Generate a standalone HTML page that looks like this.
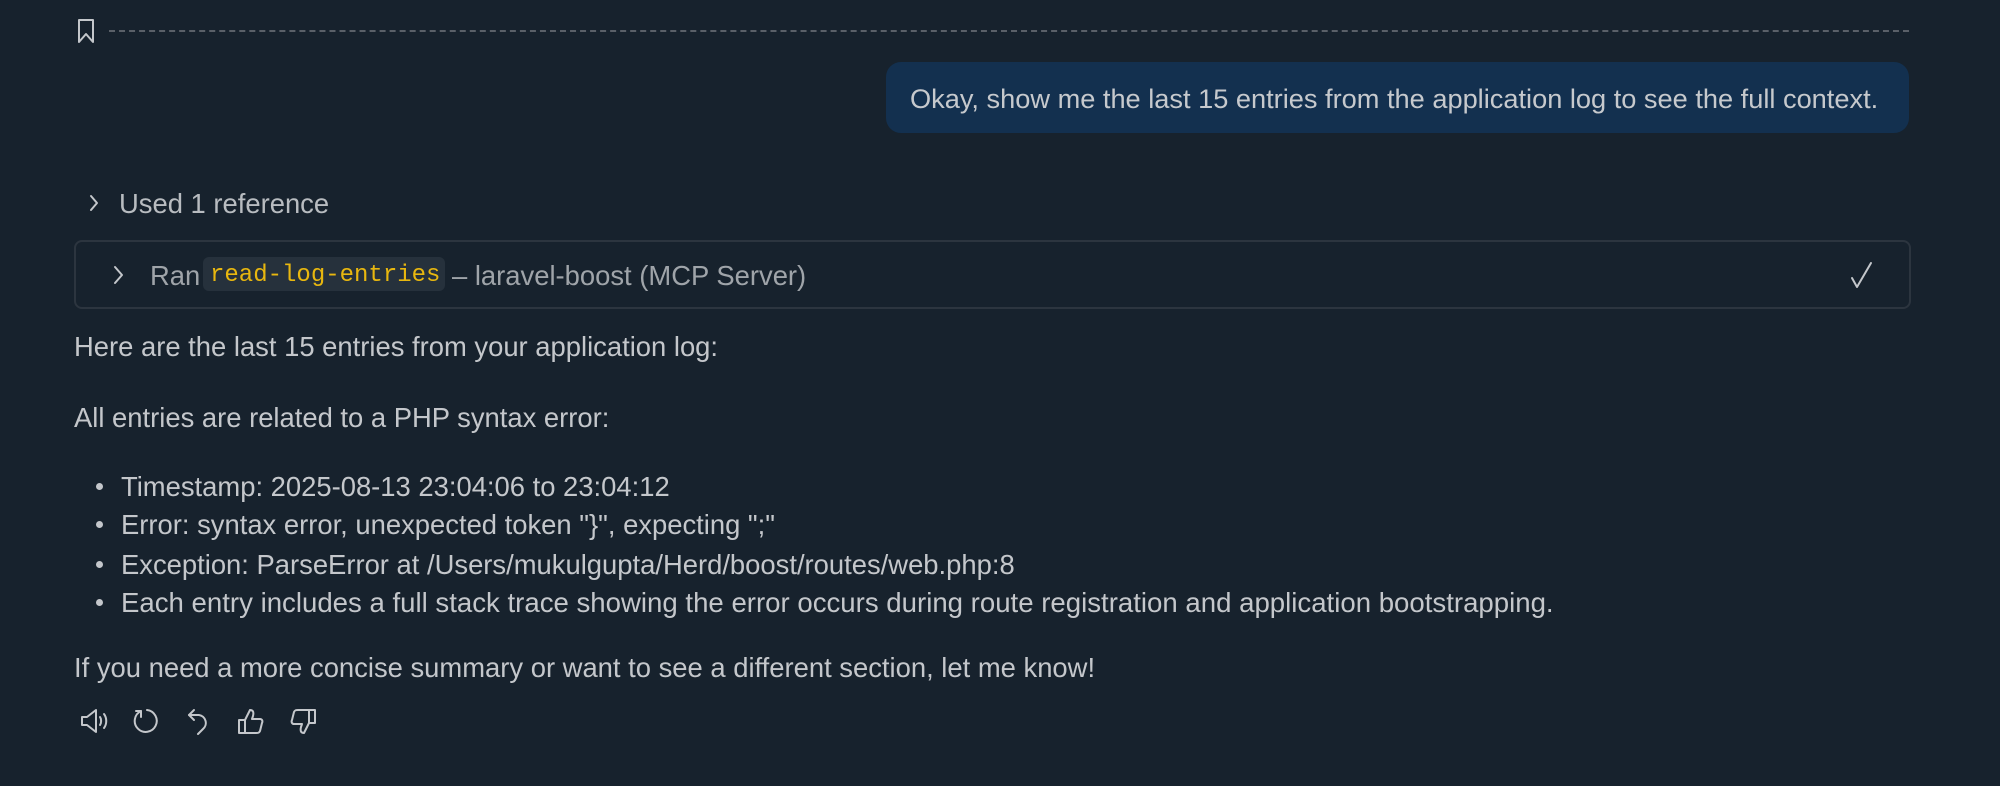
<!DOCTYPE html>
<html><head><meta charset="utf-8"><style>
html,body{margin:0;padding:0;width:2000px;height:786px;background:#17222d;overflow:hidden;font-family:"Liberation Sans",sans-serif;color:#c4c7cb}
.abs{position:absolute}
.t{font-size:27.4px;white-space:nowrap;line-height:1}
.dash{left:109px;top:30px;width:1800px;border-top:2px dashed #5a6068}
.bubble{left:886px;top:62px;width:1023px;height:71px;background:#13304f;border-radius:15px}
.box{left:74px;top:240px;width:1833px;height:65px;border:2px solid #2c353f;border-radius:8px;background:#17222d}
.pill{left:203px;top:257px;width:242px;height:34px;background:#26313c;border-radius:6px}
.code{font-family:"Liberation Mono",monospace;color:#e8b70f;font-size:24px}
.dot{width:7px;height:7px;border-radius:50%;background:#c4c7cb}
svg{position:absolute;fill:none;stroke:#c4c7cb;stroke-width:2;stroke-linecap:round;stroke-linejoin:round}
</style></head><body>
<svg style="left:76px;top:18px" width="22" height="27" viewBox="0 0 22 27" stroke="#5f656d"><path d="M3 2h14v22l-7-8-7 8z"/></svg>
<div class="abs dash"></div>
<div class="abs bubble"></div>
<div class="abs t" style="left:910px;top:85px;color:#c6c9cd;font-size:27.2px">Okay, show me the last 15 entries from the application log to see the full context.</div>
<svg style="left:88px;top:193px" width="12" height="20" viewBox="0 0 12 20" stroke="#a0a4a8"><path d="M3 3l6 7-6 7"/></svg>
<div class="abs t" style="left:119px;top:190px;color:#b8bcc0">Used 1 reference</div>
<div class="abs box"></div>
<div class="abs pill"></div>
<svg style="left:112px;top:264px" width="14" height="22" viewBox="0 0 14 22" stroke="#b0b4b8"><path d="M3 3l7 8-7 8"/></svg>
<div class="abs t" style="left:150px;top:262px;color:#9fa4a9">Ran</div>
<div class="abs code" style="left:210px;top:262px">read-log-entries</div>
<div class="abs t" style="left:452px;top:262px;color:#9fa4a9">– laravel-boost (MCP Server)</div>
<svg style="left:1848px;top:260px" width="28" height="30" viewBox="0 0 28 30" stroke="#6cc070"><path d="M4 18l5 9L23 3"/></svg>
<div class="abs t" style="left:74px;top:333px">Here are the last 15 entries from your application log:</div>
<div class="abs t" style="left:74px;top:404px">All entries are related to a PHP syntax error:</div>
<div class="abs dot" style="left:96px;top:483px"></div>
<div class="abs t" style="left:121px;top:473px">Timestamp: 2025-08-13 23:04:06 to 23:04:12</div>
<div class="abs dot" style="left:96px;top:521px"></div>
<div class="abs t" style="left:121px;top:511px">Error: syntax error, unexpected token "}", expecting ";"</div>
<div class="abs dot" style="left:96px;top:561px"></div>
<div class="abs t" style="left:121px;top:551px">Exception: ParseError at /Users/mukulgupta/Herd/boost/routes/web.php:8</div>
<div class="abs dot" style="left:96px;top:599px"></div>
<div class="abs t" style="left:121px;top:589px;font-size:27.6px">Each entry includes a full stack trace showing the error occurs during route registration and application bootstrapping.</div>
<div class="abs t" style="left:74px;top:654px">If you need a more concise summary or want to see a different section, let me know!</div>
<svg style="left:80px;top:707px" width="30" height="28" viewBox="0 0 30 28"><path d="M2 10h5l9-7v22l-9-7H2z"/><path d="M20 10c1.5 2 1.5 6 0 8M24 7c3 4 3 10 0 14"/></svg>
<svg style="left:133px;top:707px" width="28" height="28" viewBox="0 0 28 28"><path d="M8 4a11 11 0 1 0 6-1"/><path d="M8 4v6M8 4h-5"/></svg>
<svg style="left:186px;top:707px" width="26" height="28" viewBox="0 0 26 28"><path d="M8 3L3 8l5 5"/><path d="M3 8h10a8 8 0 0 1 4 14l-5 5"/></svg>
<svg style="left:236px;top:706px" width="30" height="30" viewBox="0 0 30 30"><path d="M3 14h6v13H3zM9 14l5-10c3 0 4 2 3 6l-1 3h8c2 0 3 2 2 4l-2 8c-1 2-2 2-4 2H9"/></svg>
<svg style="left:288px;top:707px" width="30" height="30" viewBox="0 0 30 30"><path d="M27 16h-6V3h6zM21 16l-5 10c-3 0-4-2-3-6l1-3H6c-2 0-3-2-2-4l2-8c1-2 2-2 4-2h11"/></svg>
</body></html>
